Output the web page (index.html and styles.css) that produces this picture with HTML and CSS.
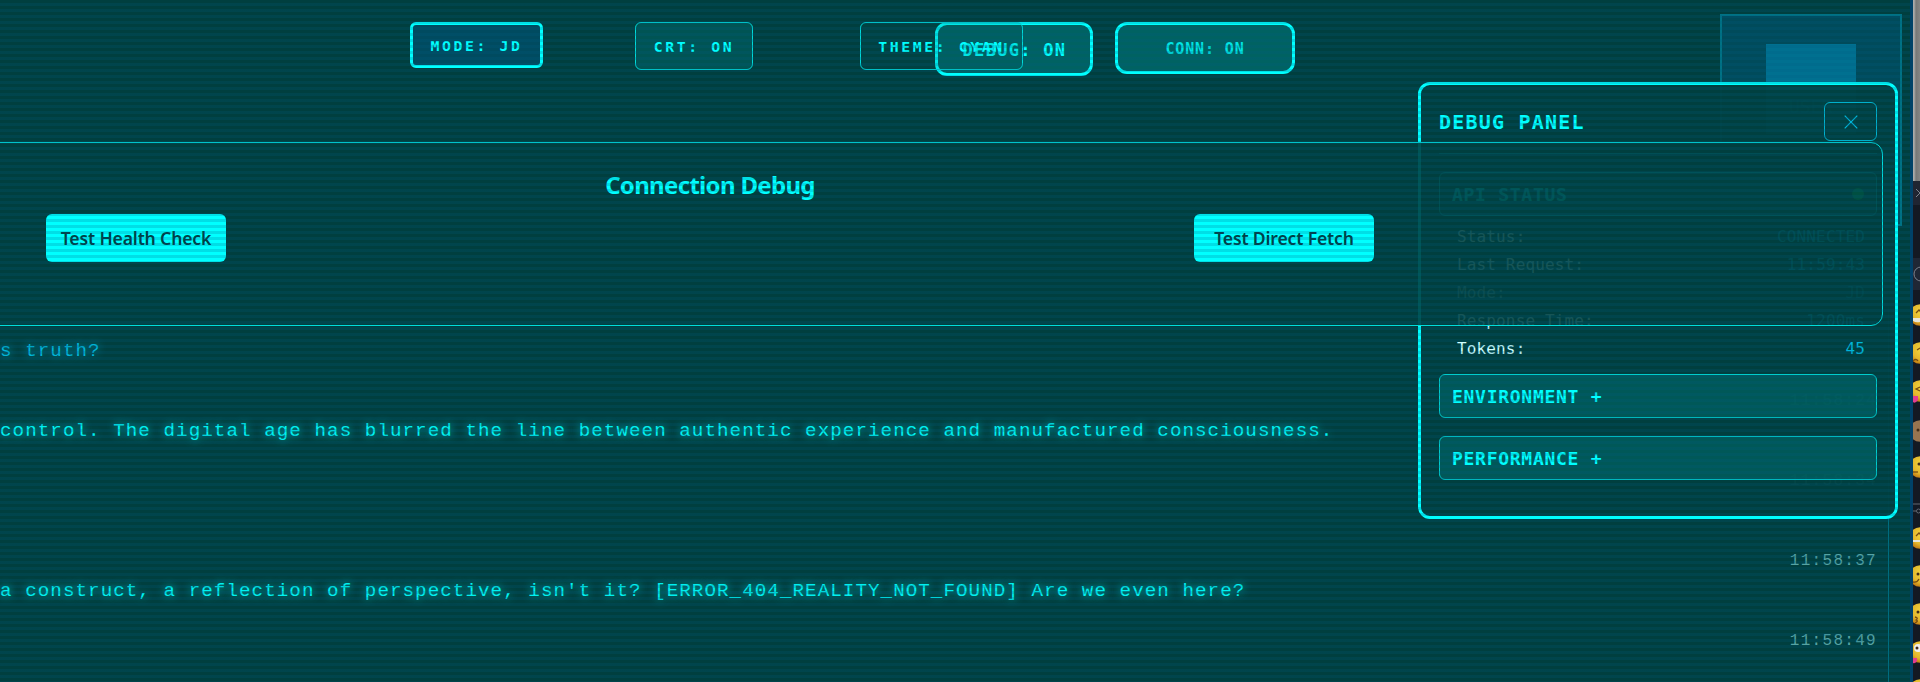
FILE: index.html
```html
<!DOCTYPE html>
<html lang="en">
<head>
<meta charset="utf-8">
<title>Debug terminal</title>
<link rel="stylesheet" href="styles.css">
</head>
<body>
<div class="desktop">
  <main class="terminal">
    <header class="toolbar">
      <button class="tool tool-mode">MODE: JD</button>
      <button class="tool tool-crt">CRT: ON</button>
      <button class="tool tool-theme">THEME: CYAN</button>
    </header>
    <div class="toggles">
      <button class="toggle toggle-debug">DEBUG: ON</button>
      <button class="toggle toggle-conn">CONN: ON</button>
    </div>
    <section class="chat">
      <article class="message"><time></time><p class="user">s truth?</p></article>
      <article class="message"><time>11:58:24</time><p>control. The digital age has blurred the line between authentic experience and manufactured consciousness.</p></article>
      <article class="message"><time>11:58:34</time><p></p></article>
      <article class="message"><time>11:58:37</time><p>a construct, a reflection of perspective, isn't it? [ERROR_404_REALITY_NOT_FOUND] Are we even here?</p></article>
      <article class="message"><time>11:58:49</time><p></p></article>
    </section>
    <aside class="avatar"><div class="portrait"></div><span>USER</span></aside>
    <aside class="debug">
      <div class="debug-head">
        <h2>DEBUG PANEL</h2>
        <button class="close" aria-label="Close"><svg width="14" height="14" viewBox="0 0 14 14"><path d="M.7.7 13.3 13.3M13.3.7.7 13.3"/></svg></button>
      </div>
      <div class="section"><span>API STATUS</span><i class="dot"></i></div>
      <dl class="facts">
        <div><dt>Status:</dt><dd>CONNECTED</dd></div>
        <div><dt>Last Request:</dt><dd>11:59:43</dd></div>
        <div class="dim"><dt>Mode:</dt><dd>JD</dd></div>
        <div><dt>Response Time:</dt><dd>1200ms</dd></div>
        <div><dt>Tokens:</dt><dd>45</dd></div>
      </dl>
      <div class="section">ENVIRONMENT +</div>
      <div class="section section-last">PERFORMANCE +</div>
    </aside>
    <section class="connection">
      <h3>Connection Debug</h3>
      <div class="actions">
        <button>Test Health Check</button>
        <button>Test Direct Fetch</button>
      </div>
    </section>
    <div class="scanlines"></div>
  </main>
  <aside class="neighbour">
    <div class="titlebar"></div>
    <div class="picker">
      <div class="tabs"><svg width="7" height="24" viewBox="0 0 7 24"><path d="M3 8 7 12 3 16"/></svg></div>
      <div class="search"><svg width="7" height="32" viewBox="0 0 7 32"><path d="M8 9A7 7 0 0 0 8 23"/></svg></div>
      <div class="emojis">
        <svg width="7" height="380" viewBox="0 0 7 380">
          <defs>
            <radialGradient id="skin" cx=".6" cy=".35" r=".7"><stop offset="0" stop-color="#f3d840"/><stop offset=".65" stop-color="#e3b62c"/><stop offset="1" stop-color="#bd7410"/></radialGradient>
            <g id="face"><circle cx="7" cy="11" r="10.8" fill="url(#skin)"/></g>
          </defs>
          <use href="#face" y="0"/><path class="ink" d="M3 9 6 6 9 9"/><path class="teeth" d="M0 14H7V18Q3 19 0 17Z"/>
          <use href="#face" y="38"/><path class="ink" d="M4 46 7 44M0 57Q3 54 5 57"/>
          <use href="#face" y="76"/><path class="ink" d="M7 83 3 85 7 87"/><path class="tongue" d="M0 92H5V96Q2 100 0 98Z"/>
          <g class="monkey"><circle cx="7" cy="127" r="10.8"/><circle class="eye" cx="5" cy="126" r="1.5"/></g>
          <use href="#face" y="152"/><circle class="eye" cx="6" cy="160" r="1.5"/><path class="ink" d="M0 168H5"/>
          <path class="rule" d="M0 200H7M0 207H3"/><circle class="rule" cx="5.5" cy="207" r="2"/>
          <use href="#face" y="223"/><path class="ink" d="M3 232 6 229 9 232"/><path class="teeth" d="M0 236H7V238H0Z"/>
          <use href="#face" y="261"/><circle class="eye" cx="5" cy="270" r="1.5"/><path class="ink" d="M0 278Q4 279 6 275"/>
          <use href="#face" y="299"/><circle class="eye" cx="5" cy="308" r="1.5"/><path class="ink" d="M2 313Q6 314 3 316Q6 317 2 319"/>
          <use href="#face" y="337"/><circle cx="5" cy="344" r="4" fill="#eee"/><circle class="eye" cx="4" cy="344" r="1.5"/><path class="tongue" d="M0 354H4V357Q2 360 0 359Z"/>
          <use href="#face" y="375"/>
        </svg>
      </div>
    </div>
  </aside>
</div>
</body>
</html>
```
FILE: styles.css
```css
* { box-sizing: border-box; }
body { margin: 0; overflow: hidden; background: #161b25; font-family: "DejaVu Sans Mono", monospace; }
button { margin: 0; padding: 0; font-family: inherit; font-weight: 700; color: #00ffff; white-space: nowrap; }
h2, h3, p, dl, dd { margin: 0; }
.desktop { display: flex; width: 1920px; height: 682px; overflow: hidden; }
.terminal { position: relative; flex: none; width: 1913px; height: 682px; overflow: hidden; background: #003f3f; border-right: 3px solid #004268; }
.scanlines { position: absolute; inset: 0; z-index: 10; pointer-events: none; background: repeating-linear-gradient(to bottom, transparent 0 3px, rgba(0, 92, 130, .2) 3px 6px); }

.toolbar { display: flex; align-items: flex-start; padding: 22px 0 0 410px; height: 307px; }
.tool { height: 48px; padding-top: 1px; border: 1px solid #00d8d8; border-radius: 6px; background: #005454; font-size: 14.8px; letter-spacing: 2.6px; }
.tool-mode { width: 133px; height: 46px; margin-right: 92px; border: 3px solid #00ffff; background: #004b60; }
.tool-crt { width: 118px; margin-right: 107px; }
.tool-theme { position: relative; z-index: 4; width: 163px; background: rgba(0, 84, 84, .15); }
.toggles { position: absolute; z-index: 3; left: 935px; top: 22px; display: flex; align-items: flex-start; gap: 22px; }
.toggle { border: 3px solid #00ffff; border-radius: 12px; background: rgba(0, 128, 128, .55); }
.toggle-debug { width: 158px; height: 54px; padding: 1px 0 0 1px; font-size: 17px; letter-spacing: 1.3px; }
.toggle-conn { width: 180px; height: 52px; padding-top: 2px; font-size: 15px; letter-spacing: .85px; color: #00e4e4; }

.chat { width: 1889px; height: 400px; border-right: 1px solid #006d7d; font-family: "Liberation Mono", monospace; }
.message { height: 80px; padding-right: 11px; }
.message time { display: block; height: 31px; padding-top: 4px; line-height: 20px; text-align: right; font-size: 16px; letter-spacing: 1.3px; color: #56a3a3; }
.message p { height: 26px; line-height: 26px; font-size: 19.2px; letter-spacing: 1.065px; white-space: nowrap; color: #00f0f0; text-shadow: 0 0 8px #00cccc; }
.message .user { color: #00b4d8; text-shadow: 0 0 8px #00a0c0; }

.avatar { position: absolute; left: 1720px; top: 14px; width: 182px; height: 212px; padding-top: 28px; border: 2px solid #007284; background: #004b5b; text-align: center; color: #00a0b0; }
.portrait { width: 90px; height: 90px; margin: 0 auto; background: #007090; }
.avatar span { position: absolute; left: 67px; top: 80px; font-size: 18px; }

.debug { position: absolute; z-index: 2; left: 1418px; top: 82px; width: 480px; height: 437px; padding: 17px 18px; border: 3px solid #00ffff; border-radius: 12px; background: rgba(0, 63, 63, .95); color: #00ffff; }
.debug-head { display: flex; justify-content: space-between; align-items: flex-start; height: 52px; margin-bottom: 18px; border-bottom: 1px solid #00a0a0; }
.debug h2 { line-height: 41px; font-size: 20px; letter-spacing: 1.2px; }
.close { display: grid; place-items: center; width: 53px; height: 39px; border: 1px solid #00b0cc; border-radius: 6px; background: transparent; }
.close svg { fill: none; stroke: #00b8dc; stroke-width: 1.2; }
.section { display: flex; align-items: center; justify-content: space-between; height: 44px; padding: 0 12px; border: 1px solid #00cccc; border-radius: 6px; background: rgba(0, 128, 128, .4); font-size: 18px; font-weight: 700; letter-spacing: .72px; }
.section-last { margin-top: 18px; }
.dot { width: 12px; height: 12px; border-radius: 50%; background: #00cc55; }
.facts { padding: 7px 12px 11px 18px; font-size: 16px; }
.facts div { display: flex; justify-content: space-between; height: 28px; line-height: 28px; }
.facts dt { color: #d0ffff; letter-spacing: .14px; }
.facts dd { color: #00b4d8; letter-spacing: .14px; }
.facts .dim { opacity: .55; }

.connection { position: absolute; z-index: 4; left: -463px; top: 142px; width: 2346px; height: 184px; padding: 24px; border: 1px solid #00dcdc; border-radius: 12px; background: rgba(0, 63, 63, .89); font-family: "Noto Sans", "Open Sans", sans-serif; }
.connection h3 { height: 47px; line-height: 35px; text-align: center; font-size: 24px; color: #00ffff; letter-spacing: -.68px; }
.actions { display: flex; justify-content: space-around; }
.actions button { width: 180px; height: 48px; border: 0; border-radius: 6px; background: #00ffff; color: #003f46; font-size: 17.6px; font-weight: 600; letter-spacing: -.16px; }

.neighbour { flex: none; width: 7px; background: #141923; }
.titlebar { height: 181px; background: linear-gradient(90deg, #aaa 0 1px, #777 3px, #858585); }
.tabs { height: 24px; background: #202532; }
.picker svg { display: block; fill: none; stroke: #7c818c; }
.search { height: 32px; margin: 53px 0 14px; background: #202735; }
.emojis svg { stroke: none; }
.picker .ink { fill: none; stroke: #774b12; stroke-width: 1.3; }
.picker .eye { fill: #432c18; }
.picker .teeth { fill: #e8e5da; }
.picker .tongue { fill: #e43c91; }
.picker .monkey { fill: #987450; }
.picker .rule { fill: none; stroke: #626873; }
```
